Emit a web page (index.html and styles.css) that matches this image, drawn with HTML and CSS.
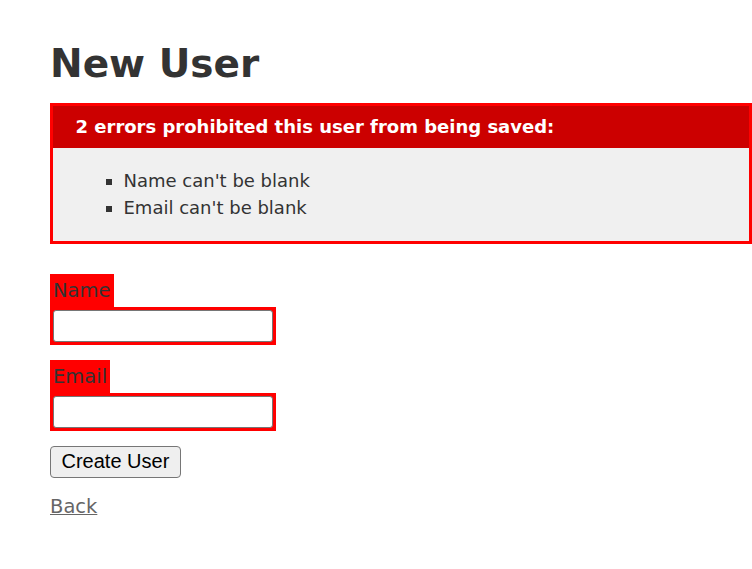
FILE: index.html
```html
<!DOCTYPE html>
<html>
<head>
<meta charset="utf-8">
<title>New User</title>
<link rel="stylesheet" href="styles.css">
</head>
<body>
<div class="page">
  <h1>New User</h1>
  <form class="user-form">
    <div class="error-explanation">
      <h2>2 errors prohibited this user from being saved:</h2>
      <ul>
        <li>Name can't be blank</li>
        <li>Email can't be blank</li>
      </ul>
    </div>
    <div class="field">
      <div class="field-with-errors"><label for="user_name">Name</label></div>
      <div class="field-with-errors"><input type="text" id="user_name" class="text-input"></div>
    </div>
    <div class="field">
      <div class="field-with-errors"><label for="user_email">Email</label></div>
      <div class="field-with-errors"><input type="text" id="user_email" class="text-input"></div>
    </div>
    <div class="actions">
      <button type="button" class="submit-btn">Create User</button>
    </div>
  </form>
  <a href="#" class="back-link">Back</a>
</div>
</body>
</html>
```

FILE: styles.css
```css
html, body {
  background-color: #fff;
  margin: 0;
  padding: 0;
}
body {
  color: #333;
  font-family: "DejaVu Sans", Verdana, sans-serif;
  font-size: 19.5px;
  line-height: 27px;
}
.page {
  box-sizing: border-box;
  width: 752px;
  padding: 49.5px 0 30px 50px;
}
h1 {
  font-size: 39px;
  line-height: 27px;
  margin: 0 0 26px;
  font-weight: bold;
}
.user-form {
  margin: 0;
}
.error-explanation {
  box-sizing: border-box;
  width: 702px;
  border: 3px solid red;
  padding: 10.5px 10.5px 0;
  margin-bottom: 30px;
  background-color: #f0f0f0;
}
.error-explanation h2 {
  text-align: left;
  font-weight: bold;
  padding: 7.5px 7.5px 7.5px 22.5px;
  font-size: 18px;
  line-height: 27px;
  margin: -10.5px -10.5px 0;
  background-color: #c00;
  color: #fff;
}
.error-explanation ul {
  margin: 19.5px 0;
  padding-left: 60px;
}
.error-explanation li {
  font-size: 18px;
  list-style: square;
}
.field, .actions {
  margin-bottom: 15px;
}
.field-with-errors {
  padding: 3px;
  background-color: red;
  display: table;
}
.field-with-errors label {
  color: #333;
}
.text-input {
  display: block;
  box-sizing: border-box;
  width: 220px;
  height: 32px;
  margin: 0;
  border: 1px solid #767676;
  border-radius: 3px;
  background: #fff;
  padding: 2px 3px;
  font-family: "Liberation Sans", Arial, sans-serif;
  font-size: 20px;
}
.submit-btn {
  font-family: "Liberation Sans", Arial, sans-serif;
  font-size: 20px;
  line-height: 23px;
  padding: 3px 10.5px 4px;
  color: #000;
  background: #efefef;
  border: 1px solid #767676;
  border-radius: 4px;
  margin: 0;
}
.back-link {
  color: #666;
}
```
